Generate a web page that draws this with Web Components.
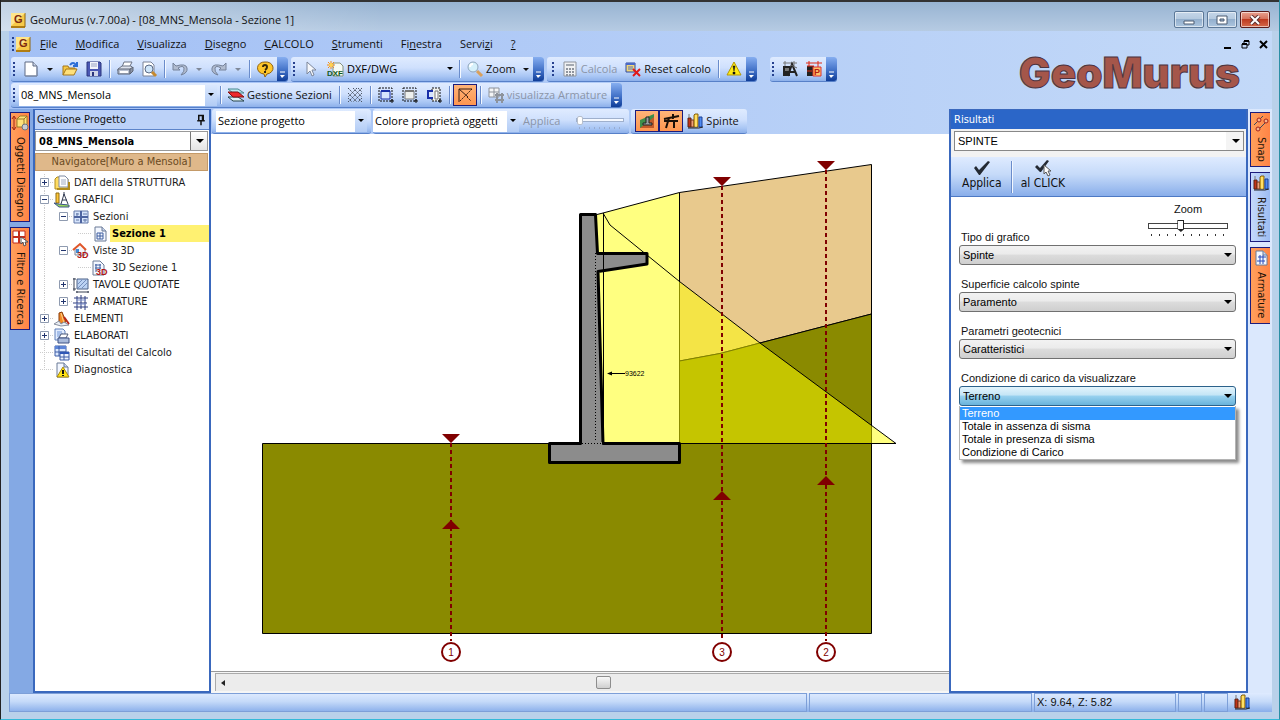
<!DOCTYPE html>
<html lang="it">
  <head>
    <meta charset="UTF-8" />
    <meta name="viewport" content="width=device-width, initial-scale=1" />
    <title>GeoMurus</title>
    <style>
      html,
      body {
        height: 100%;
        margin: 0;
      }
      body {
        --ui: "Open Sans", "Noto Sans", sans-serif;
        --tahoma: "DejaVu Sans Condensed", "DejaVu Sans", sans-serif;
        --sans: "Liberation Sans", Arial, sans-serif;
        font: 11px/16px var(--ui);
        color: #111;
        overflow: hidden;
      }
    </style>
  </head>
  <body>
    <gm-app></gm-app>

    <script>
      // ---------- icons, all on a 16x16 grid ----------
      const bars = `<path d="M1 5h3v9H1z" fill="#c33418" stroke="#5a2010"/><path d="M2 1v4" stroke="#777"/><path d="M4 7h3v7H4z" fill="#f0a07a" stroke="#72331a"/><path d="M7 2l1-1h3v13H7z" fill="#ffcf2e" stroke="#80601a"/><path d="M9 2v12" stroke="#fff0a0"/><path d="M12 4h3v10h-3z" fill="#4f8bf0" stroke="#1b3f94"/><path d="M1 15h11l4-1" stroke="#222"/>`;
      const page = `<path d="M3 1h7l4 4v10H3z" fill="#f3f7ff" stroke="#6b7a96"/><path d="M10 1v4h4" fill="#c9d5ec" stroke="#6b7a96"/>`;
      const mark3d = `<text x="4" y="15" font-size="9" font-weight="bold" fill="#b01414">3D</text>`;
      const icons = {
        app: `<path d="M1 1h14v13H1z" fill="#f7c948"/><path d="M1 14h14v2H1z" fill="#b07d12"/><path d="M15 1v14" stroke="#8e6410"/><path d="M1 1h14L1 14z" fill="#ffe58a"/><text x="4" y="11" font-size="11" font-weight="bold" fill="#7d2a12">G</text>`,
        blank: `<path d="M2 1h8l4 4v10H2z" fill="#fff" stroke="#5e6b85"/><path d="M10 1v4h4" fill="#cdd6e6" stroke="#5e6b85"/><path d="M3 15h11V6" fill="none" stroke="#7f8ca6"/>`,
        open: `<path d="M1 14V5h5l1 2h6v3" fill="#f6c945" stroke="#a5761a"/><path d="M1 14l3-6h11l-3 6z" fill="#ffe07a" stroke="#a5761a"/><path d="M8 4q3-4 6 0M11 5h4V1" fill="none" stroke="#2b6dd6" stroke-width="2"/>`,
        save: `<path d="M1 1h13l1 1v13H1z" fill="#4a58b4" stroke="#2b357c"/><path d="M4 1h8v7H4z" fill="#f2f4fb"/><path d="M5 3h6M5 5h6" stroke="#98a2c4"/><path d="M4 10h8v5H4z" fill="#cfd5e8"/><path d="M6 11h2v4H6z" fill="#2b357c"/>`,
        print: `<path d="M5 6l2-5h8l-3 6z" fill="#fff" stroke="#6c7486"/><path d="M1 8l4-3h9l2 2-3 3H1z" fill="#dfe4ee" stroke="#6c7486"/><path d="M1 8h12v5H1z" fill="#b9c1d1" stroke="#5c6475"/><path d="M13 8l3-2v4l-3 3z" fill="#8a93a6" stroke="#5c6475"/><path d="M3 11h8" stroke="#fff" stroke-width="2"/>`,
        preview: `<path d="M2 1h8l3 3v11H2z" fill="#fff" stroke="#7a8398"/><circle cx="8" cy="8" r="4" fill="#cfe6fa" stroke="#5b6a86"/><path d="M11 11l4 4" stroke="#c58930" stroke-width="3"/>`,
        undo: `<path d="M1 2v7h7L6 7q5-3 6 0t-3 7q7-2 6-7T4 5z" fill="#b1bccf" stroke="#75829a"/>`,
        redo: `<path d="M15 2v7H8l2-2q-5-3-6 0t3 7Q0 12 1 7t11-2z" fill="#b1bccf" stroke="#75829a"/>`,
        help: `<path d="M8 1a7 6 0 0 1 2 12l-2 3-1-3A7 6 0 0 1 8 1z" fill="#ffc629" stroke="#8f6212"/><path d="M6 6q0-2 2-2t2 2-2 3" fill="none" stroke="#3a2a08" stroke-width="2"/><path d="M7 10h2v2H7z" fill="#3a2a08"/>`,
        pointer: `<path d="M4 1v12l3-3 2 5 2-1-2-5h4z" fill="#f5f7fb" stroke="#7d879b"/>`,
        dxf: `<path d="M6 2h7l3 3v10H6z" fill="#f6faf4" stroke="#86927e"/><path d="M4 0v8M0 4h8M1 1l6 6M7 1L1 7" stroke="#f08a1c"/><circle cx="4" cy="4" r="2" fill="#ffd34d"/><text x="0" y="15" font-size="8" font-weight="bold" fill="#145a1c">DXF</text>`,
        zoom: `<circle cx="6" cy="6" r="5" fill="#d5f0fb" stroke="#8fa5bb"/><path d="M3 6q0-3 3-3" fill="none" stroke="#fff" stroke-width="2"/><path d="M10 10l5 5" stroke="#d9a05c" stroke-width="3"/>`,
        calc: `<path d="M2 1h12v14H2z" fill="#f0f1f3" stroke="#8f949d"/><path d="M4 3h8v2H4z" fill="#a3a8b0"/><path d="M4 8h8M4 11h8M4 14h8" stroke="#8f949d" stroke-width="2" stroke-dasharray="2 1"/>`,
        reset: `<path d="M1 2h9v9H1z" fill="#f0d679" stroke="#2f489e"/><path d="M1 2h9v2H1z" fill="#4a69c9"/><path d="M3 6h5M3 8h5" stroke="#5573c5"/><path d="M8 8l7 7M15 8l-7 7" stroke="#e01818" stroke-width="2"/>`,
        warn: `<path d="M8 1l7 13H1z" fill="#ffeb14" stroke="#b39708" stroke-linejoin="round"/><path d="M7 5h2l-1 5zM7 11h2v2H7z" fill="#111" stroke="#111" stroke-width=".5"/>`,
        texta: `<path d="M1 2h14M3 0v5M12 0v5" stroke="#777"/><path d="M1 5h7v10H1z" fill="#222"/><path d="M3 7h4v3H3z" fill="#777"/><path d="M6 15l4-12 5 12M8 11h5" fill="none" stroke="#222" stroke-width="2"/><path d="M9 4l6 3" stroke="#666"/>`,
        textp: `<path d="M0 2h16M3 0v5M12 0v8" stroke="#e02814"/><path d="M1 5h7v10H1z" fill="#222"/><path d="M1 5h7M1 10h5" stroke="#e02814"/><path d="M7 6h8v9H7z" fill="#ffc26b" stroke="#d33"/><text x="8" y="14" font-size="9" font-weight="bold" fill="#b81c10">P</text>`,
        sections: `<path d="M0 2h10l6 4H5z" fill="#b9e9ee" stroke="#4b8790"/><path d="M0 10h10l6 4H5z" fill="#dff5f7" stroke="#26434a"/><path d="M0 5h10l6 5H5z" fill="#ee2b2b" stroke="#801010"/>`,
        hatch: `<path d="M1 1l14 14M1 6l9 9M1 11l4 4M6 1l9 9M11 1l4 4M15 1L1 15M10 1L1 10M15 6l-9 9M15 11l-4 4" stroke="#4d5666" stroke-dasharray="2 1"/>`,
        frame1: `<path d="M1 1h13v13H1z" fill="none" stroke="#111" stroke-dasharray="2 1"/><path d="M3 4h9v8H3z" fill="#d7e4ff" stroke="#1a2fa8"/><path d="M3 4h9" stroke="#1a2fa8" stroke-width="2"/><path d="M14 12v4M12 14h4" stroke="#111"/>`,
        frame2: `<path d="M1 1h13v13H1z" fill="none" stroke="#111" stroke-dasharray="2 1"/><path d="M3 4h9v8H3z" fill="#eef0ee" stroke="#777"/><path d="M3 4h9" stroke="#777" stroke-width="2"/><path d="M14 12v4M12 14h4" stroke="#111"/>`,
        frame3: `<path d="M6 1h8v13H6z" fill="#eef0ee" stroke="#111" stroke-dasharray="2 1"/><path d="M7 4H2v7h5" fill="#d7e4ff" stroke="#1a2fa8" stroke-width="2"/><path d="M9 4h3v8H9z" fill="#fff" stroke="#777"/><path d="M14 12v4M12 14h4" stroke="#111"/>`,
        axes: `<path d="M2 15V2h13M2 2l9 8" fill="none" stroke="#3a1d12"/><path d="M15 2L3 14" stroke="#3a1d12" stroke-dasharray="2 1"/><path d="M10 10l4 4" stroke="#3a1d12" stroke-dasharray="2 1"/>`,
        rebar: `<path d="M1 1h10v9H1zM6 1v9M1 5h10" fill="#f4f5f6" stroke="#8d939c"/><path d="M7 8h9M7 13h9M9 6v10M14 6v10" stroke="#8d939c" stroke-width="2"/>`,
        terrain: `<path d="M1 15V7L15 1v14z" fill="#3f8f4a"/><path d="M1 15L15 4v11z" fill="#c35a2b"/><path d="M4 12v-2h3V4h3v6h3v2z" fill="#9aa0a0" stroke="#222"/>`,
        structure: `<path d="M1 6l15-3M10 1v5M6 5L3 15M1 8h14M11 8v7" fill="none" stroke="#1b0f08" stroke-width="2"/>`,
        chart: bars,
        check: `<path d="M0 8l2-2 3 4 9-9 2 1L6 15H5z" fill="#242a33"/>`,
        checkclick: `<path d="M0 7l2-2 3 3 7-8 2 1-8 11H5z" fill="#242a33"/><path d="M9 5v9l2-2 2 4 2-1-2-4h3z" fill="#fff" stroke="#555"/>`,
        folder: `<path d="M1 14V4l2-2h3l1 2h7v10z" fill="#ffdc62" stroke="#b08b1d"/><path d="M5 1h6l3 3v8H5z" fill="#fff" stroke="#7f8ba3"/><path d="M7 5h5M7 7h5M7 9h5" stroke="#9fabc3"/><path d="M3 14h12V7" fill="none" stroke="#b08b1d" stroke-width="2"/>`,
        graphics: `<path d="M2 1h3v10H2z" fill="#ffc838" stroke="#8d6a12"/><path d="M10 2L7 12M10 2l4 10M8 8h5M10 0v3" fill="none" stroke="#333c52"/><path d="M0 11l4 1 11 1v2H5z" fill="#9adb5a" stroke="#3e5487"/>`,
        sheets: `<path d="M1 2h14v12H1z" fill="#d6e4fb" stroke="#6379a8"/><path d="M8 2v12M1 8h14" stroke="#4d64a0" stroke-width="2"/><path d="M3 5h3M10 5h4M3 11h3M10 11h4M4 4v3M12 10v3" stroke="#6379a8"/>`,
        sheet: page + `<path d="M5 7h6v6H5zM8 7v6M5 10h6" fill="none" stroke="#3e5fa0"/>`,
        view3d: `<path d="M2 6l5-5 5 5v6H2z" fill="#f4f5f9" stroke="#7c8296"/><path d="M0 7l7-6 6 6" fill="none" stroke="#e0562a" stroke-width="2"/><path d="M3 6h3v4H3z" fill="#3f8bd8"/>` + mark3d,
        sheet3d: `<path d="M1 1h7l4 4v10H1z" fill="#f3f7ff" stroke="#6b7a96"/><path d="M3 5h6M3 8h6M4 4v8M8 4v5" fill="none" stroke="#3e5fa0"/>` + mark3d,
        quoted: `<path d="M4 2h11v10H4z" fill="#bcd3f4" stroke="#4b6087"/><path d="M5 11l8-8M9 11l5-5M5 7l4-4" stroke="#7590bd"/><path d="M1 1v13M0 2h3M0 12h3M3 15h13M4 14v2M15 14v2" stroke="#3b4355"/>`,
        armor: `<path d="M1 4h14M0 9h14M1 13h14M4 2v14M8 1v14M12 2v14" stroke="#2f3f80"/><path d="M3 6h10M3 10h10" stroke="#7b8ecb"/>`,
        elements: `<path d="M5 2l3-1 4 10-7 2z" fill="#f28a25" stroke="#8a3c0a"/><path d="M7 2l3 10" stroke="#ffd08a"/><path d="M0 13l5-3 2 3 3-2 5 3-8 1z" fill="#e9edf3" stroke="#8990a0"/><path d="M10 6l5 7" stroke="#b8281c" stroke-width="2"/>`,
        reports: `<path d="M1 1h8l2 2v9H1z" fill="#e2edff" stroke="#5f7fb9"/><path d="M3 4h5M3 6h6M3 8h4" stroke="#6f93d4"/><path d="M5 10l2-4h7l-2 4z" fill="#fff" stroke="#4d5a78"/><path d="M4 10h11v5H4z" fill="#a9bbdc" stroke="#3c5183"/>`,
        results: `<path d="M1 1h11v10H1z" fill="#dce9ff" stroke="#3c5da5"/><path d="M1 1h11v3H1z" fill="#5d85d8"/><path d="M5 1v10M1 7h11" stroke="#3c5da5"/><path d="M6 7h9v8H6z" fill="#eef4ff" stroke="#3c5da5"/><path d="M6 7h9v2H6z" fill="#2f58b8"/><path d="M10 8v7M6 12h9" stroke="#3c5da5"/>`,
        diag: page + `<path d="M9 5l6 10H3z" fill="#ffe314" stroke="#a8870a"/><path d="M9 8v4M9 13v1" stroke="#111" stroke-width="2"/>`,
        objects: `<path d="M5 4l3-3h7v8l-3 3H5z" fill="#ffe27a" stroke="#9b7a26"/><path d="M5 4h7v8M12 4l3-3" stroke="#9b7a26"/><circle cx="13" cy="12" r="3" fill="#c8ccd2" stroke="#6f757f"/><path d="M2 2v12M0 4l2-3 2 3M0 12l2 3 2-3" fill="none" stroke="#a12512"/>`,
        filter: `<path d="M1 1h12v12H1z" fill="#fff" stroke="#c22c1c"/><path d="M7 1v12M1 7h12" stroke="#c22c1c" stroke-width="2"/><path d="M9 7v7l2-2 1 4 2-1-1-3h3z" fill="#fff" stroke="#555"/>`,
        snap: `<path d="M1 10l9-9M6 14l9-9" stroke="#3f4a5c"/><g fill="#f6b48c" stroke="#a3221a"><circle cx="6" cy="5" r="2"/><circle cx="13" cy="6" r="2"/><circle cx="5" cy="14" r="2"/></g>`,
        armorsheet: page + `<path d="M5 7h8M4 11h8M7 5v9M10 5v9" stroke="#2748b8"/>`,
        pin: `<path d="M5 2h6v7H5zM3 9h10M8 9v6" fill="none" stroke="#111" stroke-width="2"/><path d="M9 2h2v7H9z" fill="#111"/>`,
      };

      class GmIcon extends HTMLElement {
        constructor() {
          super();
          this.attachShadow({ mode: "open" });
        }
        connectedCallback() {
          this.shadowRoot.innerHTML = `
            <style>
              :host { display: inline-flex; flex: none; width: 16px; height: 16px; }
              svg { width: 100%; height: 100%; overflow: visible; }
              text { font-family: var(--sans); }
            </style>
            <svg viewBox="0 0 16 16" fill="none" aria-hidden="true">${icons[this.getAttribute("name")] || ""}</svg>`;
        }
      }
      customElements.define("gm-icon", GmIcon);

      // ---------- toolbar with grip and overflow chevron ----------
      class GmToolbar extends HTMLElement {
        constructor() {
          super();
          this.attachShadow({ mode: "open" }).innerHTML = `
            <style>
              :host {
                display: flex; align-items: stretch; height: 25px; box-sizing: border-box;
                border-bottom: 1px solid #5780c8; border-radius: 3px;
                background: linear-gradient(#dfebff, #cfe0fd 45%, #a9c6f4 80%, #8db0ea);
              }
              .grip {
                flex: none; width: 2px; margin: 5px 4px 4px 2px;
                background: repeating-linear-gradient(#27418f 0 2px, transparent 2px 4px);
              }
              :host([plain]) .grip, :host([plain]) .more { display: none; }
              .items { flex: 1; display: flex; align-items: center; }
              .more {
                flex: none; width: 11px; padding: 0; border: 0; border-radius: 0 3px 3px 0;
                display: flex; align-items: flex-end; justify-content: center;
                background: linear-gradient(#86aef0, #3c6cc4 60%, #0f3d98);
              }
              svg { width: 7px; height: 8px; margin-bottom: 2px; }
            </style>
            <span class="grip"></span>
            <div class="items"><slot></slot></div>
            <button class="more" aria-label="Altri pulsanti">
              <svg viewBox="0 0 7 8"><path d="M1 1h5" stroke="#fff"/><path d="M1 4h5L3 7z" fill="#fff"/></svg>
            </button>`;
        }
      }
      customElements.define("gm-toolbar", GmToolbar);

      class GmSep extends HTMLElement {
        constructor() {
          super();
          this.attachShadow({ mode: "open" }).innerHTML = `
            <style>
              :host { display: block; flex: none; width: 1px; height: 18px; margin: 0 3px; background: #6a8ccb; box-shadow: 1px 0 #f3f8ff; }
            </style>`;
        }
      }
      customElements.define("gm-sep", GmSep);

      // ---------- tool button ----------
      class GmTool extends HTMLElement {
        constructor() {
          super();
          this.attachShadow({ mode: "open" });
        }
        connectedCallback() {
          const icon = this.getAttribute("icon");
          const off = this.hasAttribute("off") ? "disabled" : "";
          const name = this.getAttribute("name") || "";
          this.shadowRoot.innerHTML = `
            <style>
              :host { display: flex; flex: none; }
              button {
                display: flex; align-items: center; gap: 3px; height: 22px; padding: 0 3px;
                border: 1px solid transparent; background: none; font: inherit; color: inherit; white-space: nowrap;
              }
              button:disabled { color: #8b95a8; }
              :host([active]) button { background: linear-gradient(#ffb478, #ff9650); border-color: #1c1c7c; }
              :host([split]) button { padding-right: 0; }
              :host([tall]) button { flex-direction: column; height: 36px; gap: 0; font: 12px/14px var(--tahoma); }
              .arrow { margin-left: 4px; border: 3px solid transparent; border-top-color: #111; border-bottom: 0; }
              :host([split]) .arrow { margin: 0 4px 0 5px; }
              :host([split][off]) .arrow { border-top-color: #7f8898; }
            </style>
            <button ${off} ${name ? `aria-label="${name}"` : ""}>
              ${icon ? `<gm-icon name="${icon}"></gm-icon>` : ""}<slot></slot>
              ${this.hasAttribute("split") || this.hasAttribute("menu") ? `<span class="arrow"></span>` : ""}
            </button>`;
        }
      }
      customElements.define("gm-tool", GmTool);

      // ---------- drop-down; look = flat | clear | bold | classic | button | hot ----------
      class GmCombo extends HTMLElement {
        constructor() {
          super();
          this.attachShadow({ mode: "open" });
        }
        connectedCallback() {
          const label = this.getAttribute("label");
          const title = this.getAttribute("name") || label;
          const options = this.getAttribute("options").split("|");
          this.shadowRoot.innerHTML = `
            <style>
              :host { display: block; flex: none; }
              label { display: block; padding-left: 2px; font: 11px/15px var(--sans); }
              .box { position: relative; display: flex; }
              .box::after {
                content: ""; position: absolute; right: 4px; top: 50%; margin-top: -2px;
                border: 4px solid transparent; border-top-color: #000; border-bottom: 0; pointer-events: none;
              }
              select {
                appearance: none; box-sizing: border-box; width: 100%; height: 20px; margin: 0;
                padding: 0 20px 0 3px; border: 1px solid #b9c6dd; border-radius: 0; outline: 0;
                background: #fff; color: #000; font: inherit;
              }
              :host([look="flat"]) select {
                height: 21px; border: 0; padding: 0 14px 0 2px;
                background: linear-gradient(#dbe8fe, #b2ccf5) right / 12px no-repeat, #fff;
              }
              :host([look="flat"]) .box::after, :host([look="clear"]) .box::after { right: 3px; border-width: 3px; border-bottom: 0; }
              :host([look="clear"]) select { border: 0; background: none; padding-left: 0; }
              :host([look="bold"]) select {
                font: bold 11px var(--tahoma); border-color: #999;
                background: linear-gradient(#777, #777) right 16px top / 1px no-repeat, linear-gradient(#fff, #e4e4e4) right / 17px no-repeat, #fff;
              }
              :host([look="classic"]) select {
                font: 11px var(--sans); border-color: #888;
                background: linear-gradient(#f4f4f4, #f4f4f4) right / 17px no-repeat, #fff;
              }
              :host([look="button"]) select, :host([look="hot"]) select {
                font: 11px var(--sans); border: 1px solid #707070; border-radius: 3px; padding-left: 3px;
                background: linear-gradient(#f2f2f2, #ebebeb 45%, #dcdcdc 50%, #cfcfcf);
              }
              :host([look="hot"]) select { border-color: #2c628b; background: linear-gradient(#e3f4fc, #c4e5f6 45%, #98d1ef 50%, #68b3db); }
              ul {
                position: absolute; left: 0; right: 0; top: 100%; margin: 0; padding: 1px 0 0; list-style: none;
                border: 1px solid #b4b4b4; border-top: 0; background: #fff; box-shadow: 3px 3px 3px #8a8a8a;
                font: 11px/13px var(--sans); color: #000;
              }
              li { padding: 0 2px; }
              li[aria-selected="true"] { background: #3399ff; color: #fff; }
            </style>
            ${label ? `<label for="s">${label}</label>` : ""}
            <div class="box">
              <select id="s" ${label ? "" : `aria-label="${title}"`}>${options.map((o) => `<option>${o}</option>`).join("")}</select>
              ${
                this.hasAttribute("open")
                  ? `<ul role="listbox" aria-label="${title}">${options
                      .map((o, i) => `<li role="option" aria-selected="${i === 0}">${o}</li>`)
                      .join("")}</ul>`
                  : ""
              }
            </div>`;
        }
      }
      customElements.define("gm-combo", GmCombo);

      // ---------- slider ----------
      class GmSlider extends HTMLElement {
        constructor() {
          super();
          this.attachShadow({ mode: "open" });
        }
        connectedCallback() {
          const label = this.getAttribute("label");
          this.shadowRoot.innerHTML = `
            <style>
              :host { display: flex; flex-direction: column; align-items: center; width: 80px; font: 11px/14px var(--sans); }
              input { appearance: none; width: 100%; height: 14px; margin: 3px 0 0; background: none; }
              input::-webkit-slider-runnable-track { height: 6px; box-sizing: border-box; border: 1px solid #444; background: #fff; }
              input::-webkit-slider-thumb {
                appearance: none; width: 7px; height: 12px; margin-top: -4px;
                background: linear-gradient(#fff, #fff) 1px 1px / 5px 8px no-repeat, #222;
                clip-path: polygon(0 0, 100% 0, 100% 75%, 50% 100%, 0 75%);
              }
              .ticks { width: 74px; height: 2px; margin-top: 1px; background: repeating-linear-gradient(90deg, #333 0 1px, transparent 1px 8px); }
              :host([small]) { width: 48px; margin: 0 5px 0 12px; }
              :host([small]) input { margin: 0; height: 12px; }
              :host([small]) input::-webkit-slider-runnable-track { height: 4px; border-color: #9fb0cd; background: #f4f8ff; }
              :host([small]) input::-webkit-slider-thumb { width: 6px; height: 9px; margin-top: -3px; background: #fff; border: 1px solid #b7bfcc; border-radius: 2px; clip-path: none; }
              :host([small]) .ticks { width: 42px; background: repeating-linear-gradient(90deg, #98abd0 0 1px, transparent 1px 5px); }
            </style>
            ${label ? `<label for="r">${label}</label>` : ""}
            <input id="r" type="range" min="0" max="100" value="${this.getAttribute("value")}"
              ${label ? "" : `aria-label="Trasparenza" disabled`} />
            <span class="ticks"></span>`;
        }
      }
      customElements.define("gm-slider", GmSlider);

      // ---------- title bar ----------
      class GmTitlebar extends HTMLElement {
        constructor() {
          super();
          this.attachShadow({ mode: "open" }).innerHTML = `
            <style>
              :host {
                display: flex; align-items: center; gap: 4px; height: 31px; box-sizing: border-box; padding: 7px 9px 0 9px;
                border-top: 2px solid #333; background: linear-gradient(90deg, #fff6, #fff0 30%), linear-gradient(#98b4d2, #b6cbe3);
              }
              h2 { flex: 1; margin: 0; font: inherit; color: #111; }
              .keys { display: flex; gap: 3px; margin-bottom: 1px; }
              button {
                display: flex; align-items: center; justify-content: center; width: 30px; height: 17px; padding: 0;
                border: 1px solid #5c7898; border-radius: 2px; box-shadow: inset 0 0 0 1px #ffffff90;
                background: linear-gradient(#c5d6e9, #b4c9df 48%, #93afcd 50%, #adc6df);
              }
              .close { border-color: #5a1b1b; background: linear-gradient(#e8a190, #d5705a 48%, #bd3a20 50%, #d5694a); }
              svg { width: 12px; height: 10px; }
            </style>
            <gm-icon name="app"></gm-icon>
            <h2><slot></slot></h2>
            <div class="keys">
              <button aria-label="Riduci a icona"><svg viewBox="0 0 12 10"><path d="M1 6h10v3H1z" fill="#fff" stroke="#4a5a70"/></svg></button>
              <button aria-label="Ripristina"><svg viewBox="0 0 12 10"><path d="M1 1h10v8H1z" fill="#fff" stroke="#4a5a70"/><path d="M4 4h4v2H4z" fill="#9db4cf" stroke="#4a5a70"/></svg></button>
              <button class="close" aria-label="Chiudi"><svg viewBox="0 0 12 10"><path d="M2 1l8 8M10 1L2 9" stroke="#5c3030" stroke-width="4"/><path d="M2 1l8 8M10 1L2 9" stroke="#fff" stroke-width="2"/></svg></button>
            </div>`;
        }
      }
      customElements.define("gm-titlebar", GmTitlebar);

      // ---------- menu bar ----------
      class GmMenubar extends HTMLElement {
        constructor() {
          super();
          const items = [
            "<u>F</u>ile", "<u>M</u>odifica", "<u>V</u>isualizza", "<u>D</u>isegno", "<u>C</u>ALCOLO",
            "<u>S</u>trumenti", "Fi<u>n</u>estra", "Servi<u>z</u>i", "<u>?</u>",
          ];
          this.attachShadow({ mode: "open" }).innerHTML = `
            <style>
              :host { display: flex; align-items: center; height: 26px; padding: 0 0 0 3px; }
              .grip { width: 2px; height: 14px; margin-right: 1px; background: repeating-linear-gradient(#27418f 0 2px, transparent 2px 4px); }
              nav { flex: 1; display: flex; }
              nav button { border: 0; padding: 0 9px 1px; background: none; font: inherit; color: inherit; }
              .mdi { display: flex; gap: 1px; }
              .mdi button { display: flex; padding: 0 4px; border: 0; background: none; }
              svg { width: 9px; height: 9px; }
            </style>
            <span class="grip"></span>
            <gm-icon name="app"></gm-icon>
            <nav>${items.map((t) => `<button>${t}</button>`).join("")}</nav>
            <div class="mdi">
              <button aria-label="Riduci"><svg viewBox="0 0 9 9"><path d="M1 8h7" stroke="#000" stroke-width="2"/></svg></button>
              <button aria-label="Ripristina finestra"><svg viewBox="0 0 9 9"><path d="M3 3V1h5v4H6M1 4h5v4H1z" fill="none" stroke="#000"/><path d="M1 4h5M3 1h5" stroke="#000" stroke-width="2"/></svg></button>
              <button aria-label="Chiudi finestra"><svg viewBox="0 0 9 9"><path d="M1 1l7 7M8 1L1 8" stroke="#000" stroke-width="2"/></svg></button>
            </div>`;
        }
      }
      customElements.define("gm-menubar", GmMenubar);

      // ---------- rail with vertical tabs ----------
      class GmRail extends HTMLElement {
        constructor() {
          super();
          this.attachShadow({ mode: "open" });
        }
        connectedCallback() {
          const tabs = this.getAttribute("tabs").split("|").map((t) => t.split(":"));
          this.shadowRoot.innerHTML = `
            <style>
              :host { display: flex; flex-direction: column; flex: none; gap: 5px; box-sizing: border-box; width: 24px; padding: 3px 3px 0 1px; background: #84a9e4; }
              :host([right]) { padding: 3px 2px 0; background: #dbe8fd; }
              button {
                display: flex; align-items: center; gap: 6px; box-sizing: border-box; width: 20px; padding: 2px 0 4px; white-space: nowrap;
                writing-mode: vertical-rl; border: 1px solid #1c1c7c; color: #1a1208; font: 11px/16px var(--tahoma);
                background: linear-gradient(90deg, #ffa05c, #ff8446);
              }
              :host([right]) button { border-right: 0; }
              .on { background: linear-gradient(90deg, #c5d9fb, #9cbcf2); }
            </style>
            ${tabs.map(([icon, text, on]) => `<button class="${on || ""}"><gm-icon name="${icon}"></gm-icon>${text}</button>`).join("")}`;
        }
      }
      customElements.define("gm-rail", GmRail);

      // ---------- project tree ----------
      class GmTree extends HTMLElement {
        constructor() {
          super();
          // level, expander, icon, text
          const rows = [
            [1, "+", "folder", "DATI della STRUTTURA"],
            [1, "-", "graphics", "GRAFICI"],
            [2, "-", "sheets", "Sezioni"],
            [3, "", "sheet", "Sezione 1"],
            [2, "-", "view3d", "Viste 3D"],
            [3, "", "sheet3d", "3D Sezione 1"],
            [2, "+", "quoted", "TAVOLE QUOTATE"],
            [2, "+", "armor", "ARMATURE"],
            [1, "+", "elements", "ELEMENTI"],
            [1, "+", "reports", "ELABORATI"],
            [1, "", "results", "Risultati del Calcolo"],
            [1, "", "diag", "Diagnostica"],
          ];
          const box = (sign) => `
            <svg class="box" viewBox="0 0 9 9"><path d="M.5.5h8v8h-8z" fill="#fff" stroke="#8f9bb0"/>
            <path d="M2 4.5h5${sign === "+" ? "M4.5 2v5" : ""}" stroke="#22356e"/></svg>`;
          this.attachShadow({ mode: "open" }).innerHTML = `
            <style>
              :host { display: block; font: 11px/17px var(--tahoma); color: #1b1b1b; }
              ul { margin: 0; padding: 2px 0 0; list-style: none; }
              li {
                display: flex; align-items: center; height: 17px; padding-left: 5px; white-space: nowrap;
                background: repeating-linear-gradient(#ccc 0 1px, transparent 1px 2px) 9px 0 / 1px 100% no-repeat;
              }
              li:last-child { background-size: 1px 50%; }
              .l2 { padding-left: 24px; }
              .l3 { padding-left: 43px; }
              .join { flex: none; display: flex; align-items: center; width: 14px; height: 17px; background: linear-gradient(90deg, #ccc 50%, transparent 0) 4px 8px / 2px 1px repeat-x; }
              .box { width: 9px; height: 9px; }
              .text { flex: 1; margin-left: 2px; padding-left: 2px; }
              .sel .text { background: #fff171; font-weight: bold; color: #000; }
            </style>
            <ul role="tree">
              ${rows
                .map(
                  ([level, sign, icon, text]) => `
                <li role="treeitem" aria-level="${level}" class="l${level} ${text === "Sezione 1" ? "sel" : ""}">
                  <span class="join">${sign ? box(sign) : ""}</span>
                  <gm-icon name="${icon}"></gm-icon><span class="text">${text}</span>
                </li>`
                )
                .join("")}
            </ul>`;
        }
      }
      customElements.define("gm-tree", GmTree);

      class GmProjectPanel extends HTMLElement {
        constructor() {
          super();
          this.attachShadow({ mode: "open" }).innerHTML = `
            <style>
              :host { display: flex; flex-direction: column; flex: none; box-sizing: border-box; width: 178px; border: 2px solid #3a68bd; border-top-width: 1px; background: #fff; }
              header {
                display: flex; align-items: center; justify-content: space-between; height: 19px; margin-bottom: 1px; padding: 0 2px;
                border-bottom: 1px solid #5c84ca; background: #bcd2f8; font: 11px/17px var(--tahoma);
              }
              header gm-icon { width: 12px; height: 12px; }
              h3 { margin: 0; font: inherit; }
              gm-combo { margin-right: 1px; }
              .nav { height: 18px; margin: 2px 1px 1px 0; border: 1px solid #c49a68; box-sizing: border-box; background: #dfb88a; color: #6a4a22; text-align: center; font: 11px/15px var(--tahoma); }
            </style>
            <header><h3>Gestione Progetto</h3><gm-icon name="pin"></gm-icon></header>
            <gm-combo look="bold" name="Progetto" options="08_MNS_Mensola"></gm-combo>
            <div class="nav">Navigatore[Muro a Mensola]</div>
            <gm-tree></gm-tree>`;
        }
      }
      customElements.define("gm-project-panel", GmProjectPanel);

      // ---------- drawing of the wall section ----------
      class GmSectionView extends HTMLElement {
        constructor() {
          super();
          // borehole: x, ground y, water y, number
          const holes = [
            [451, 443, 520, 1],
            [722, 186, 491, 3],
            [826, 170, 476, 2],
          ];
          this.attachShadow({ mode: "open" }).innerHTML = `
            <style>
              :host { display: flex; flex: 1; min-height: 0; background: #fff; }
              svg { width: 100%; height: 100%; }
              text { font-family: var(--sans); }
            </style>
            <svg viewBox="211 134 738 537" preserveAspectRatio="xMidYMin meet" role="img" aria-label="Sezione del muro">
              <g stroke="#000">
                <path d="M262.500 443.500H871.500V633.500H262.500z" fill="#8a8a00"/>
                <path d="M679.500 192.500L871.500 164.500V314L760 343L720 353.500L679.500 361z" fill="#e8c98d"/>
                <path d="M679.500 361L720 353.500L760 343L871.500 314V443.500H679.500z" fill="#8a8a00"/>
              </g>
              <path d="M603 213L610 225L679.500 281.500L760 343L896 443.500H603z" fill="#ff0" fill-opacity=".5"/>
              <path d="M597 214.500L603 213L679.500 192.500V443H604L597 272z" fill="#ffff80"/>
              <g stroke="#000" fill="none">
                <path d="M597 214.500L603 213L679.500 192.500V282"/>
                <path d="M679.500 282V443" stroke="#8a8a00"/>
                <path d="M603.500 213V443"/>
                <path d="M603 213L610 225L679.500 281.500L760 343L896 443.500H680"/>
              </g>
              <path d="M580.500 214.500H595.500L597.500 253.500H647V264L598 271.500L603 443.500H679.500V462.500H549.500V443.500H580.500z" fill="#8c8c8c" stroke="#000" stroke-width="3" stroke-linejoin="round"/>
              <path d="M595.500 253V443" stroke="#000" stroke-dasharray="1 2"/>
              <path d="M582 443.500H602" stroke="#8c8c8c" stroke-width="3"/>
              <path d="M582 443.500H602" stroke="#000" stroke-dasharray="1 2"/>
              <path d="M603.500 255V270" stroke="#000"/>
              <path d="M609 373.500H625" stroke="#000"/><path d="M607 373.500l5-2v4z"/>
              <text x="625" y="376" font-size="7">93622</text>
              ${holes
                .map(
                  ([x, ground, water, n]) => `
                <path d="M${x} ${ground}V641" stroke="#800000" stroke-width="2" stroke-dasharray="4 3"/>
                <path d="M${x - 9} ${ground - 9}h18l-9 9zM${x - 9} ${water + 9}h18l-9-9z" fill="#800000"/>
                <circle cx="${x}" cy="652" r="9" fill="#fff" stroke="#800000" stroke-width="2"/>
                <text x="${x}" y="656" font-size="10" fill="#800000" text-anchor="middle">${n}</text>`
                )
                .join("")}
            </svg>`;
        }
      }
      customElements.define("gm-section-view", GmSectionView);

      // ---------- horizontal scroll bar ----------
      class GmScrollbar extends HTMLElement {
        constructor() {
          super();
          this.attachShadow({ mode: "open" }).innerHTML = `
            <style>
              :host { display: flex; align-items: center; height: 22px; box-sizing: border-box; padding: 1px 0 2px 4px; border-top: 1px solid #999; background: #f6f6f6; }
              .track { flex: 1; display: flex; align-items: center; height: 100%; box-sizing: border-box; border: 1px solid #aaa; border-width: 1px 0 0 1px; background: #ececec; }
              button { padding: 0 5px; border: 0; background: none; display: flex; }
              svg { width: 4px; height: 6px; }
              input { appearance: none; flex: 1; height: 14px; margin: 0; background: none; }
              input::-webkit-slider-thumb { appearance: none; width: 15px; height: 13px; border: 1px solid #8d8d8d; border-radius: 2px; background: linear-gradient(#f8f8f8, #cfcfcf); }
            </style>
            <div class="track">
              <button aria-label="Scorri a sinistra"><svg viewBox="0 0 4 6"><path d="M4 0v6L0 3z" fill="#222"/></svg></button>
              <input type="range" min="0" max="100" value="52" aria-label="Scorrimento orizzontale" />
            </div>`;
        }
      }
      customElements.define("gm-scrollbar", GmScrollbar);

      // ---------- results panel ----------
      class GmResultsPanel extends HTMLElement {
        constructor() {
          super();
          this.attachShadow({ mode: "open" }).innerHTML = `
            <style>
              :host { display: flex; flex-direction: column; flex: none; box-sizing: border-box; width: 299px; border: 2px solid #3a68bd; border-top-width: 1px; background: #fff; }
              h3 { margin: 0; padding: 0 3px; background: #2b66c8; color: #fff; font: 11px/19px var(--tahoma); }
              .pick { padding: 2px 2px 6px 3px; background: #f2f2f2; }
              .tools {
                display: flex; align-items: center; gap: 4px; height: 39px; padding: 0 7px; border-bottom: 1px solid #4d79c4;
                background: linear-gradient(#dfebff, #c5daf9 45%, #89aeea);
              }
              .tools gm-sep { height: 32px; margin: 0 1px; }
              form { display: flex; flex-direction: column; gap: 12px; padding: 5px 10px 0 8px; }
              .first { display: flex; flex-direction: column; }
              gm-slider { align-self: flex-end; margin-right: 8px; }
              .first gm-combo { margin-top: -6px; }
            </style>
            <h3>Risultati</h3>
            <div class="pick"><gm-combo look="classic" name="Grandezza" options="SPINTE"></gm-combo></div>
            <div class="tools">
              <gm-tool tall icon="check">Applica</gm-tool>
              <gm-sep></gm-sep>
              <gm-tool tall icon="checkclick">al CLICK</gm-tool>
            </div>
            <form>
              <div class="first">
                <gm-slider label="Zoom" value="40"></gm-slider>
                <gm-combo look="button" label="Tipo di grafico" options="Spinte"></gm-combo>
              </div>
              <gm-combo look="button" label="Superficie calcolo spinte" options="Paramento"></gm-combo>
              <gm-combo look="button" label="Parametri geotecnici" options="Caratteristici"></gm-combo>
              <gm-combo look="hot" open label="Condizione di carico da visualizzare"
                options="Terreno|Totale in assenza di sisma|Totale in presenza di sisma|Condizione di Carico"></gm-combo>
            </form>`;
        }
      }
      customElements.define("gm-results-panel", GmResultsPanel);

      // ---------- status bar ----------
      class GmStatusbar extends HTMLElement {
        constructor() {
          super();
          this.attachShadow({ mode: "open" }).innerHTML = `
            <style>
              :host { display: flex; gap: 2px; height: 19px; padding-right: 22px; background: linear-gradient(#dfebff, #c5daf9 45%, #89aeea); font: 11px/17px var(--sans); }
              span { box-sizing: border-box; width: 24px; border: 1px solid #7d9fd8; padding-left: 2px; white-space: nowrap; }
              .msg { flex: 1; }
              .info { width: 223px; }
              .pos { width: 142px; }
              gm-icon { margin: 1px 0 0 4px; }
            </style>
            <span class="msg"></span><span class="info"></span><span class="pos">X: 9.64, Z: 5.82</span>
            <span></span><span></span><gm-icon name="chart"></gm-icon>`;
        }
      }
      customElements.define("gm-statusbar", GmStatusbar);

      // ---------- whole window ----------
      class GmApp extends HTMLElement {
        constructor() {
          super();
          this.attachShadow({ mode: "open" }).innerHTML = `
            <style>
              :host { display: flex; flex-direction: column; box-sizing: border-box; height: 100vh; min-height: 560px; border-left: 1px solid #222; border-right: 1px solid #2b8fa5; border-bottom: 1px solid #35b9d8; background: #b9d1ea; }
              .client { flex: 1; min-height: 0; display: flex; flex-direction: column; margin: 0 7px 7px 8px; background: linear-gradient(90deg, #a3c0f5, #c3d9f8); }
              .bars { display: flex; justify-content: space-between; }
              .rows { display: flex; flex-direction: column; gap: 1px; padding-left: 2px; }
              .row { display: flex; gap: 3px; height: 25px; }
              .row gm-toolbar:nth-child(4) { margin-left: 10px; }
              h1 { margin: -8px 32px 0 0; color: #a5564a; font: 900 42px/48px Inter, "Liberation Sans", sans-serif; -webkit-text-stroke: 1px #4c3440; }
              .body { flex: 1; min-height: 0; display: flex; margin-top: 1px; }
              main { flex: 1; min-width: 0; display: flex; flex-direction: column; }
              .view-tools { display: flex; gap: 2px; padding: 0 1px; height: 25px; }
              .project { width: 198px; }
              .dxf { width: 109px; }
              .view { width: 151px; }
              .colour { width: 146px; }
              .end { padding: 0 4px; }
              .calc { padding-left: 3px; }
            </style>
            <gm-titlebar>GeoMurus (v.7.00a) - [08_MNS_Mensola - Sezione 1]</gm-titlebar>
            <div class="client">
              <gm-menubar></gm-menubar>
              <div class="bars">
                <div class="rows">
                  <div class="row">
                    <gm-toolbar>
                      <gm-tool icon="blank" name="Nuovo" split></gm-tool>
                      <gm-tool icon="open" name="Apri"></gm-tool>
                      <gm-tool icon="save" name="Salva"></gm-tool>
                      <gm-sep></gm-sep>
                      <gm-tool icon="print" name="Stampa"></gm-tool>
                      <gm-tool icon="preview" name="Anteprima"></gm-tool>
                      <gm-sep></gm-sep>
                      <gm-tool icon="undo" name="Annulla" split off></gm-tool>
                      <gm-tool icon="redo" name="Ripeti" split off></gm-tool>
                      <gm-sep></gm-sep>
                      <gm-tool icon="help" name="Guida"></gm-tool>
                    </gm-toolbar>
                    <gm-toolbar>
                      <gm-tool icon="pointer" name="Selezione"></gm-tool>
                      <gm-tool icon="dxf" name="Esporta"></gm-tool>
                      <gm-combo class="dxf" look="clear" name="Formato" options="DXF/DWG"></gm-combo>
                      <gm-sep></gm-sep>
                      <gm-tool icon="zoom" menu>Zoom</gm-tool>
                    </gm-toolbar>
                    <gm-toolbar class="calc">
                      <gm-tool icon="calc" off>Calcola</gm-tool>
                      <gm-tool icon="reset">Reset calcolo</gm-tool>
                      <gm-sep></gm-sep>
                      <gm-tool icon="warn" name="Avvisi"></gm-tool>
                    </gm-toolbar>
                    <gm-toolbar>
                      <gm-tool icon="texta" name="Relazione"></gm-tool>
                      <gm-tool icon="textp" name="Tavole"></gm-tool>
                    </gm-toolbar>
                  </div>
                  <div class="row">
                    <gm-toolbar>
                      <gm-combo class="project" look="flat" name="Progetto attivo" options="08_MNS_Mensola"></gm-combo>
                      <gm-sep></gm-sep>
                      <gm-tool icon="sections">Gestione Sezioni</gm-tool>
                      <gm-sep></gm-sep>
                      <gm-tool icon="hatch" name="Retino"></gm-tool>
                      <gm-sep></gm-sep>
                      <gm-tool icon="frame1" name="Riquadro 1"></gm-tool>
                      <gm-tool icon="frame2" name="Riquadro 2"></gm-tool>
                      <gm-tool icon="frame3" name="Riquadro 3"></gm-tool>
                      <gm-sep></gm-sep>
                      <gm-tool icon="axes" name="Assi" active></gm-tool>
                      <gm-sep></gm-sep>
                      <gm-tool icon="rebar" off>visualizza Armature</gm-tool>
                    </gm-toolbar>
                  </div>
                </div>
                <h1>GeoMurus</h1>
              </div>
              <div class="body">
                <gm-rail tabs="objects:Oggetti Disegno|filter:Filtro e Ricerca"></gm-rail>
                <gm-project-panel></gm-project-panel>
                <main>
                  <div class="view-tools">
                    <gm-toolbar plain class="end"><gm-combo class="view" look="flat" name="Vista" options="Sezione progetto"></gm-combo></gm-toolbar>
                    <gm-toolbar plain>
                      <gm-combo class="colour" look="flat" name="Colore" options="Colore proprietà oggetti"></gm-combo>
                      <gm-tool off>Applica</gm-tool>
                      <gm-slider small value="0"></gm-slider>
                    </gm-toolbar>
                    <gm-toolbar plain class="end">
                      <gm-tool icon="terrain" name="Terreno" active></gm-tool>
                      <gm-tool icon="structure" name="Struttura" active></gm-tool>
                      <gm-tool icon="chart">Spinte</gm-tool>
                    </gm-toolbar>
                  </div>
                  <gm-section-view></gm-section-view>
                  <gm-scrollbar></gm-scrollbar>
                </main>
                <gm-results-panel></gm-results-panel>
                <gm-rail right tabs="snap:Snap|chart:Risultati:on|armorsheet:Armature"></gm-rail>
              </div>
              <gm-statusbar></gm-statusbar>
            </div>`;
        }
      }
      customElements.define("gm-app", GmApp);
    </script>
  </body>
</html>
